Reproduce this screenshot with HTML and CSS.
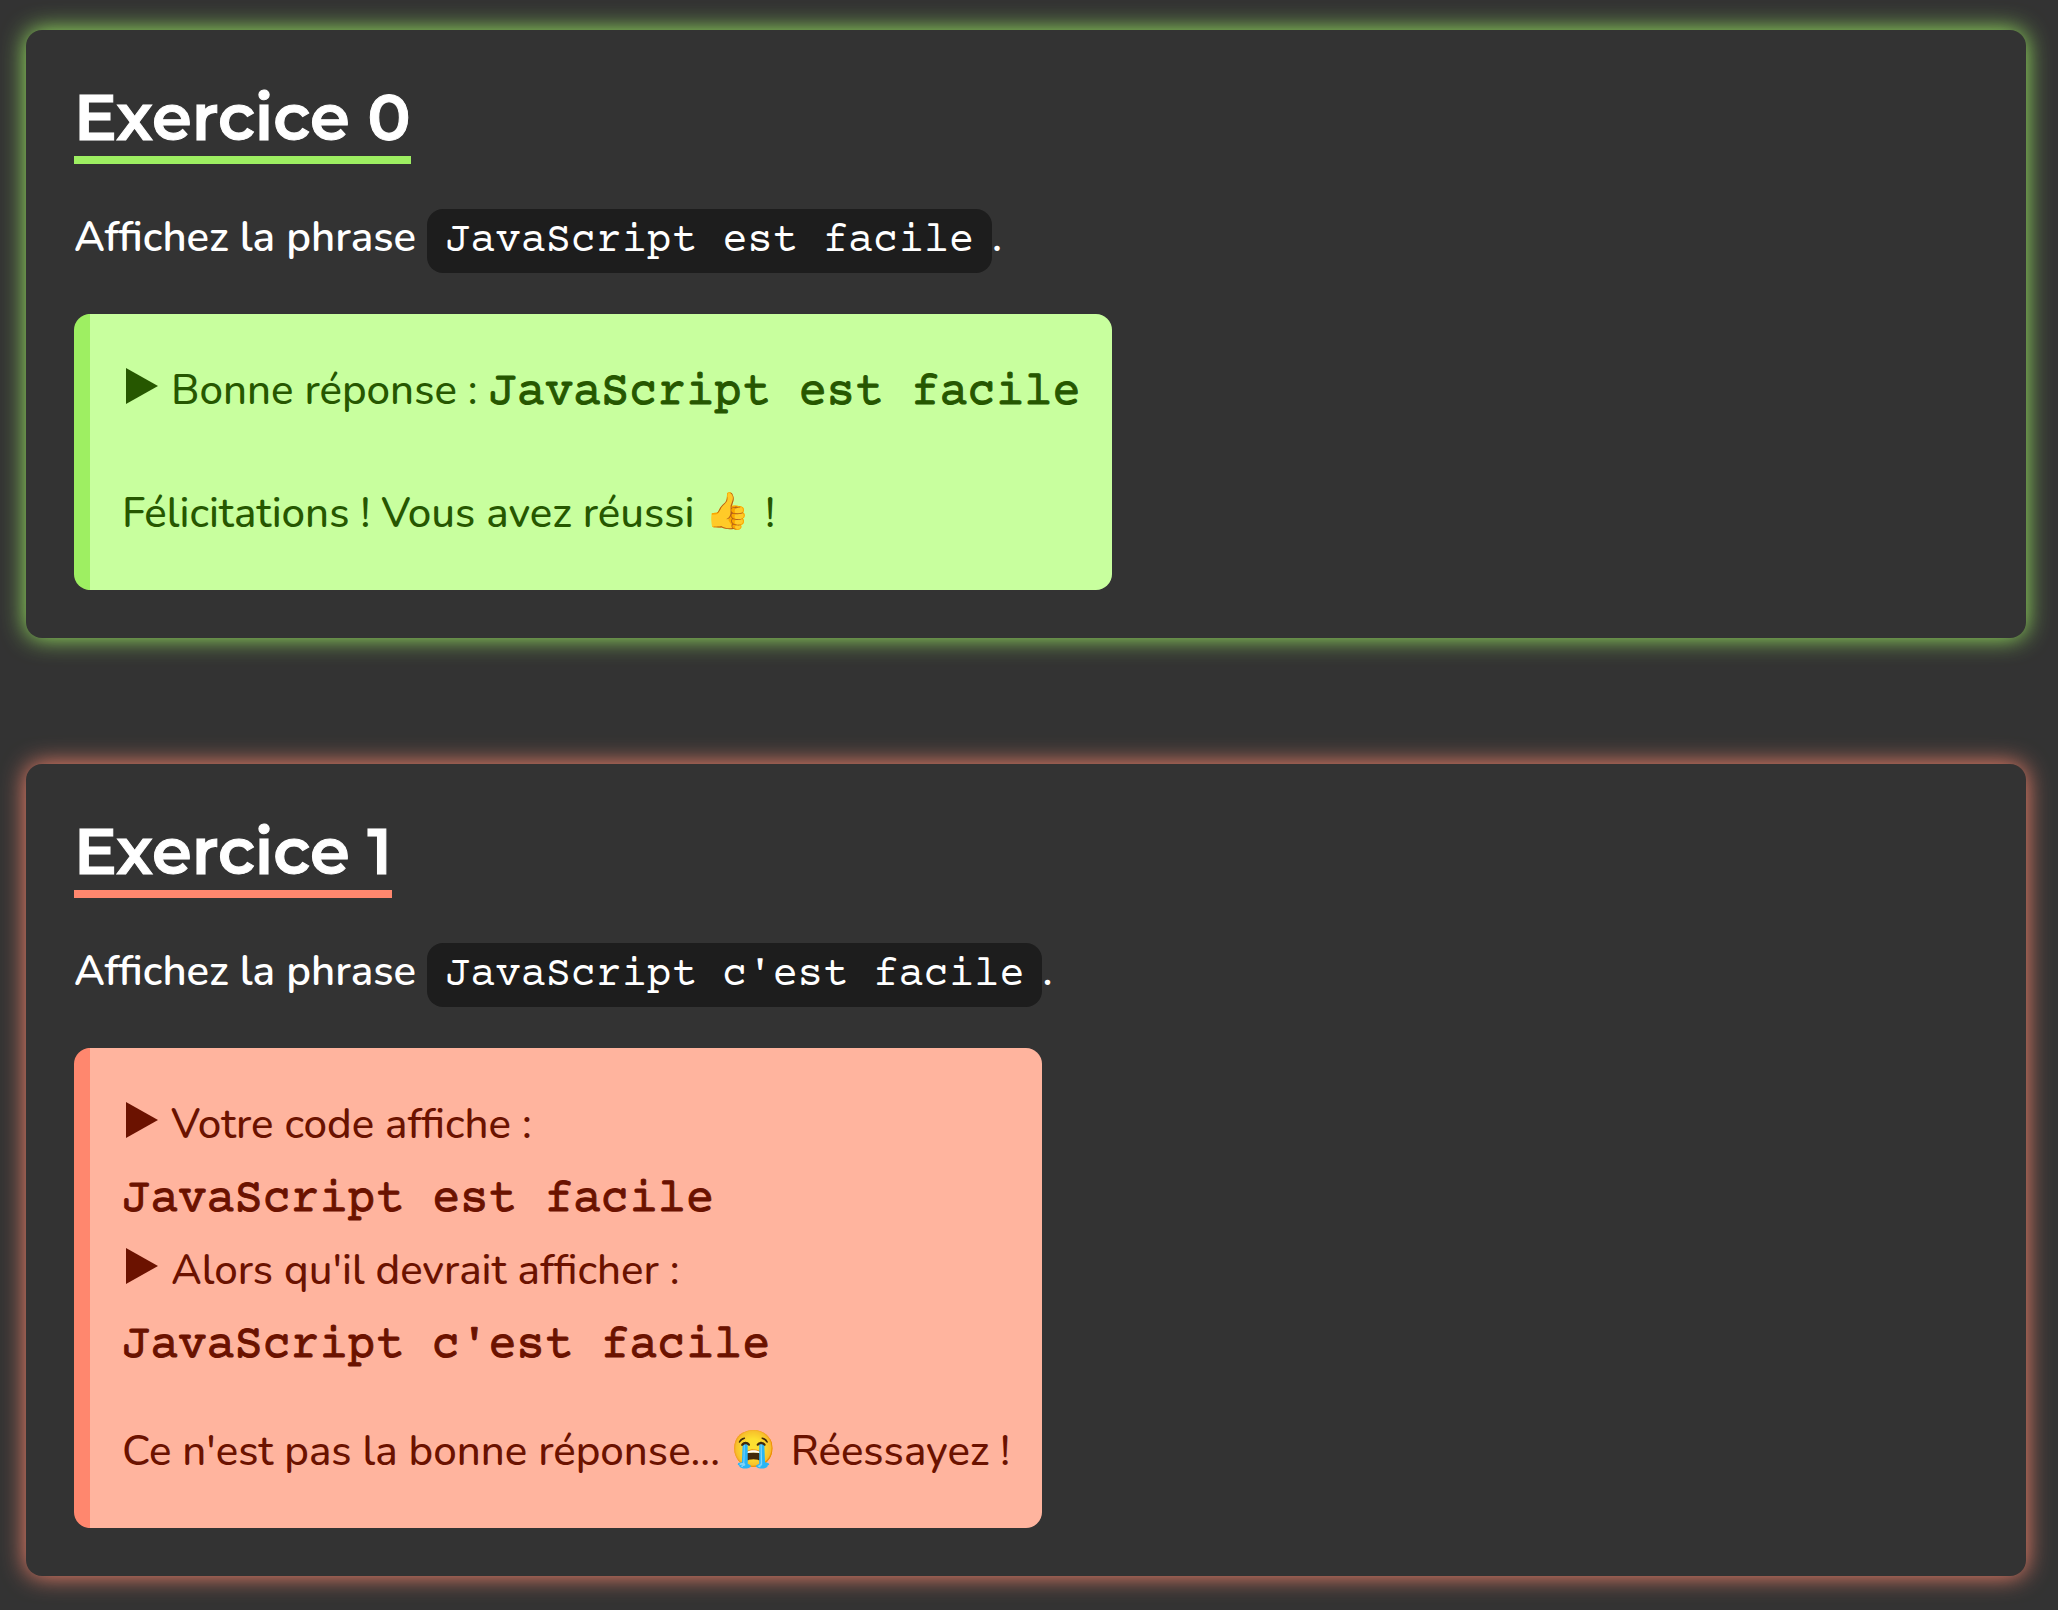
FILE: index.html
```
<!DOCTYPE html>
<html lang="fr">
<head>
<meta charset="utf-8">
<meta name="viewport" content="width=device-width, initial-scale=1">
<title>Exercices JavaScript</title>
<link rel="stylesheet" href="styles.css">
</head>
<body>
<main class="exercises">
  <section class="exercise exercise--success">
    <h2 class="exercise__title">Exercice 0</h2>
    <p class="exercise__statement">Affichez la phrase <code class="snippet">JavaScript est facile</code>.</p>
    <div class="result">
      <p class="result__line"><svg class="marker" viewBox="0 0 32 36" aria-hidden="true"><path d="M0 0L32 18L0 36Z"/></svg>Bonne réponse : <code class="output">JavaScript est facile</code></p>
      <p class="result__message">Félicitations ! Vous avez réussi <span class="emoji">👍</span> !</p>
    </div>
  </section>
  <section class="exercise exercise--error">
    <h2 class="exercise__title">Exercice 1</h2>
    <p class="exercise__statement">Affichez la phrase <code class="snippet">JavaScript c'est facile</code>.</p>
    <div class="result">
      <p class="result__line"><svg class="marker" viewBox="0 0 32 36" aria-hidden="true"><path d="M0 0L32 18L0 36Z"/></svg>Votre code affiche :</p>
      <p class="result__line"><code class="output">JavaScript est facile</code></p>
      <p class="result__line"><svg class="marker" viewBox="0 0 32 36" aria-hidden="true"><path d="M0 0L32 18L0 36Z"/></svg>Alors qu'il devrait afficher :</p>
      <p class="result__line"><code class="output">JavaScript c'est facile</code></p>
      <p class="result__message">Ce n'est pas la bonne réponse... <span class="emoji">😭</span> Réessayez !</p>
    </div>
  </section>
</main>
</body>
</html>
```
FILE: styles.css
```
* {
  box-sizing: border-box;
}

body {
  margin: 0;
  background: #333333;
  color: #ffffff;
  font-family: "Nunito", "Lato", sans-serif;
  font-size: 42px;
  font-weight: 500;
  line-height: 73px;
}

h2,
p {
  margin: 0;
}

code {
  font-family: "Courier Prime", "Liberation Mono", monospace;
  font-weight: 400;
  line-height: 1;
}

.exercises {
  display: flex;
  flex-direction: column;
  gap: 126px;
  padding: 30px 32px 32px 26px;
}

.exercise {
  display: flex;
  flex-direction: column;
  align-items: flex-start;
  padding: 48px;
  border-radius: 16px;
  background: #333333;
  box-shadow: 0 0 24px var(--accent);
}

.exercise--success {
  --accent: #9eef62;
  --fill: #c8ff9e;
  --ink: #265700;
  --message-gap: 50px;
}

.exercise--error {
  --accent: #ff876e;
  --fill: #ffb49e;
  --ink: #6b1200;
  --message-gap: 35px;
}

.exercise__title {
  border-bottom: 8px solid var(--accent);
  font-family: "Montserrat", "Inter", sans-serif;
  font-size: 64px;
  font-weight: 600;
  line-height: 78px;
  -webkit-text-stroke: 1px currentColor;
}

.exercise__statement {
  margin: 37px 0 40px;
  font-weight: 600;
}

.snippet {
  padding: 9px 18px 8px;
  border-radius: 16px;
  background: #1d1d1d;
}

.result {
  padding: 40px 32px;
  border-left: 16px solid var(--accent);
  border-radius: 16px;
  background: var(--fill);
  color: var(--ink);
}

.result__message {
  margin-top: var(--message-gap);
}

.output {
  font-size: 47px;
  -webkit-text-stroke: 1px currentColor;
}

.marker {
  width: 32px;
  height: 36px;
  margin: 0 13px 0 4px;
  fill: currentColor;
}

.emoji {
  margin-right: 4px;
  font-family: "Noto Color Emoji", sans-serif;
  font-size: 36px;
  line-height: 1;
  vertical-align: 4px;
}
```
